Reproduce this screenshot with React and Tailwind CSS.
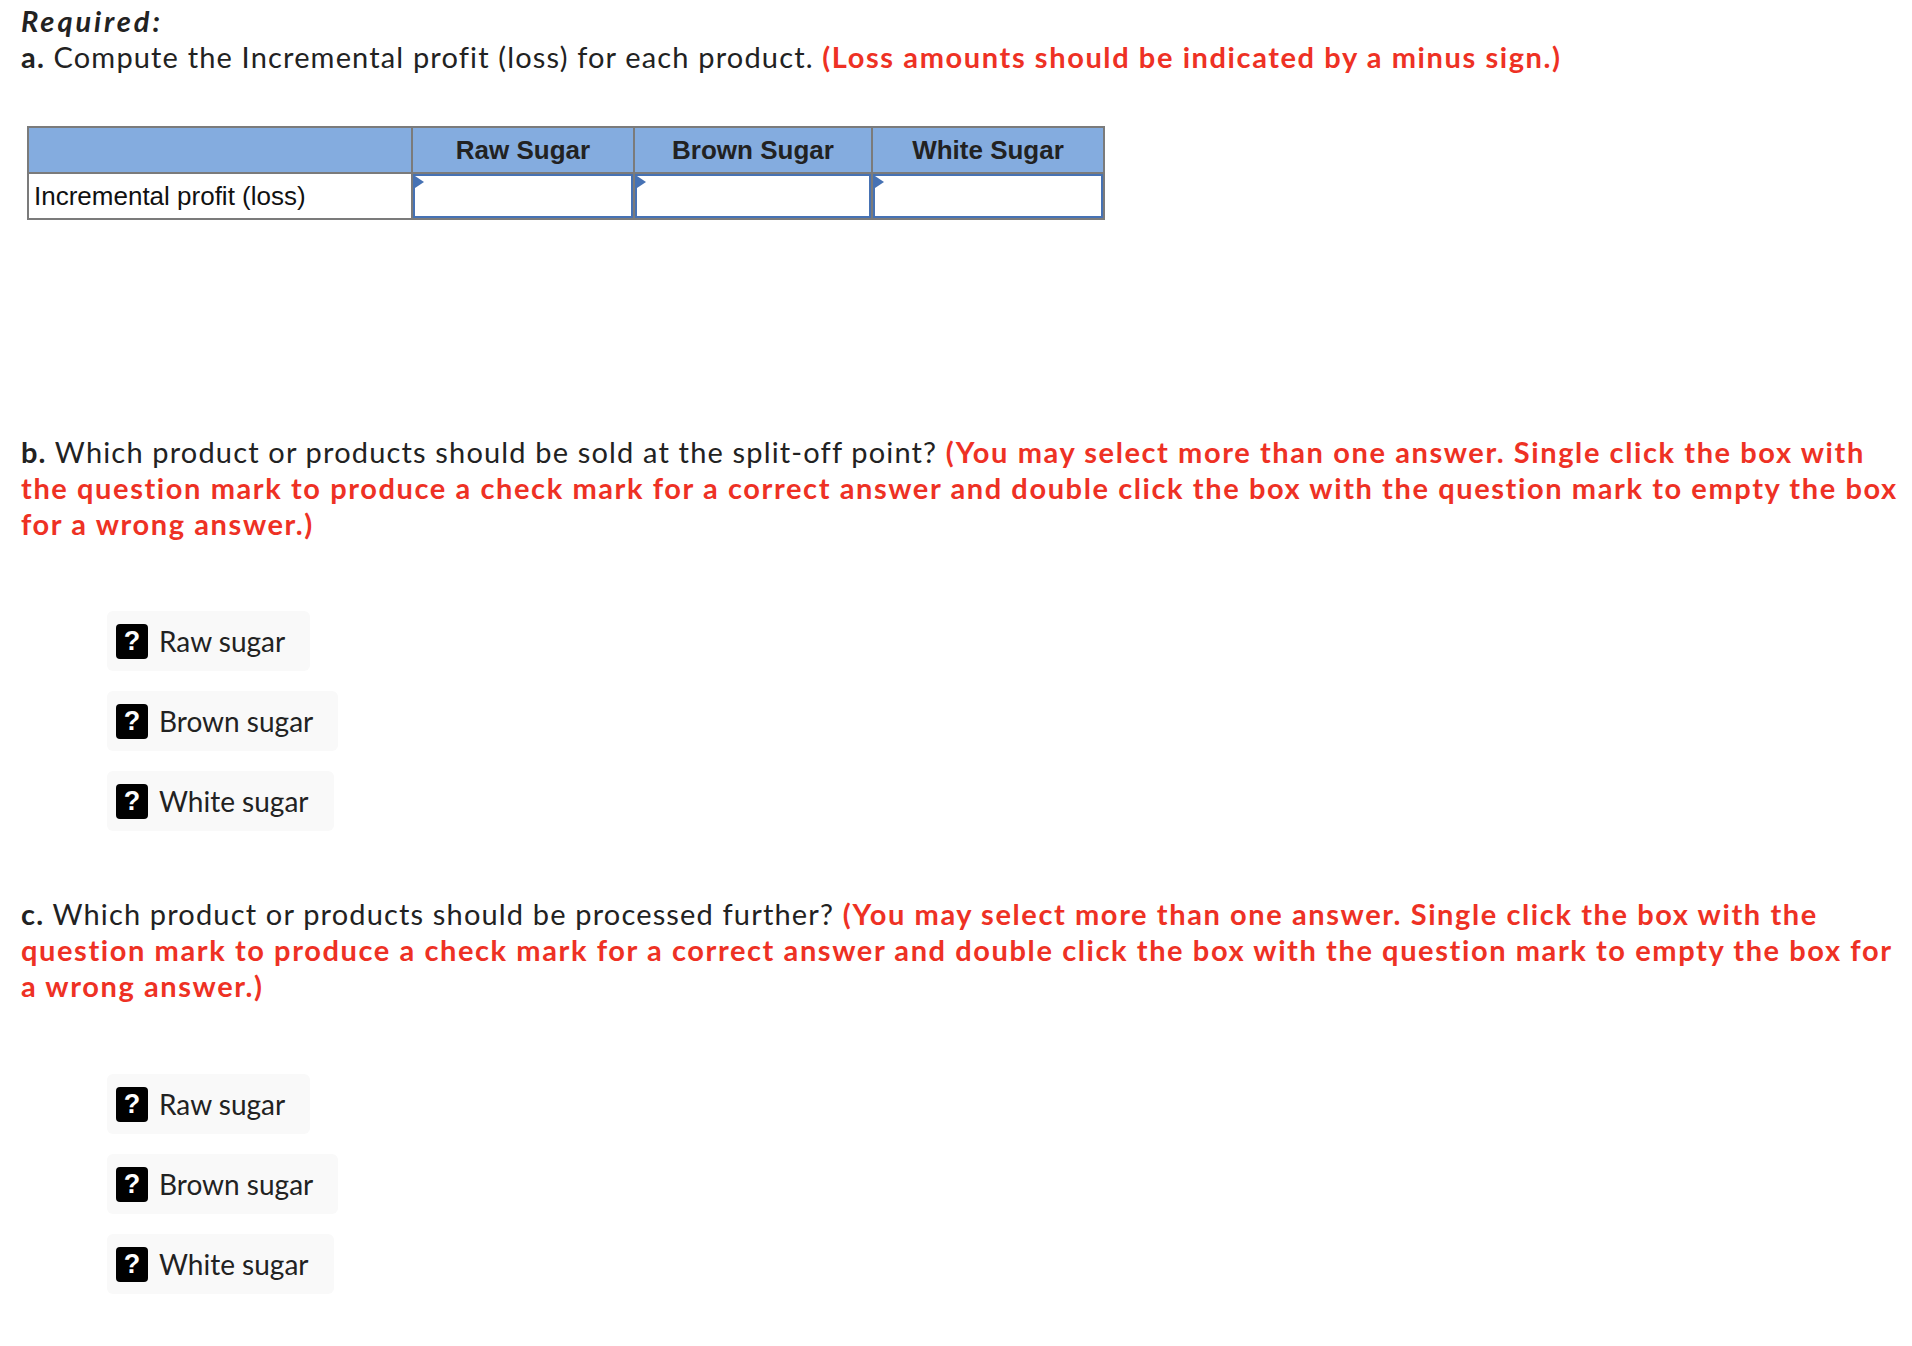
import React from "react"

const products = ["Raw Sugar", "Brown Sugar", "White Sugar"]
const choices = ["Raw sugar", "Brown sugar", "White sugar"]

// line breaks follow the reference exactly
const noteB = [
    "(You may select more than one answer. Single click the box with",
    "the question mark to produce a check mark for a correct answer and double click the box with the question mark to empty the box",
    "for a wrong answer.)",
]
const noteC = [
    "(You may select more than one answer. Single click the box with the",
    "question mark to produce a check mark for a correct answer and double click the box with the question mark to empty the box for",
    "a wrong answer.)",
]

function AnswerCell() {
    return (
        <td className="p-0 border-2 border-[#7b7b7b]">
            <div className="relative h-[44px] border-2 border-[#4672b4] bg-white">
                <span className="absolute left-0 top-0 w-0 h-0 border-y-[6px] border-y-transparent border-l-[9px] border-l-[#4672b4]" />
            </div>
        </td>
    )
}

function CheckChoice({ label }) {
    return (
        <div className="flex items-center gap-[11px] w-fit h-[60px] pl-[9px] pr-[25px] rounded-md bg-[#f9f9f9]">
            <span className="flex items-center justify-center w-[32px] h-[35px] rounded-[4px] bg-black text-white text-[27px] font-bold leading-none font-['Liberation_Sans',Arial,sans-serif]">?</span>
            <span className="text-[28px] text-[#222]">{label}</span>
        </div>
    )
}

function ChoiceList() {
    return (
        <div className="flex flex-col gap-[20px] ml-[86px]">
            {choices.map((c) => (
                <CheckChoice key={c} label={c} />
            ))}
        </div>
    )
}

function Note({ lines }) {
    return (
        <span className="font-bold tracking-[0.055em] text-[#ee3124]">
            {lines[0]}
            <br />
            {lines[1]}
            <br />
            {lines[2]}
        </span>
    )
}

export default function App() {
    return (
        <div className="min-h-screen bg-white pl-[21px] pr-[4px] pt-[3px] pb-10 text-[29px] leading-[36px] tracking-[0.04em] text-[#222] font-['Lato','Noto_Sans',sans-serif]">
            <p className="font-bold italic tracking-[0.1em]">Required:</p>
            <p>
                <b>a.</b> Compute the Incremental profit (loss) for each product.{" "}
                <span className="font-bold tracking-[0.055em] text-[#ee3124]">(Loss amounts should be indicated by a minus sign.)</span>
            </p>

            <table className="mt-[51px] ml-[6px] table-fixed border-collapse w-[1076px] font-['Liberation_Sans',Arial,sans-serif] text-[26px] leading-none tracking-normal">
                <colgroup>
                    <col className="w-[384px]" />
                    <col className="w-[222px]" />
                    <col className="w-[238px]" />
                    <col className="w-[232px]" />
                </colgroup>
                <thead>
                    <tr className="bg-[#84acdf] h-[46px]">
                        <th className="border-2 border-[#7b7b7b]"></th>
                        {products.map((p) => (
                            <th key={p} className="border-2 border-[#7b7b7b] text-center font-bold text-[#222]">{p}</th>
                        ))}
                    </tr>
                </thead>
                <tbody>
                    <tr className="h-[46px]">
                        <td className="border-2 border-[#7b7b7b] pl-[5px] text-left text-[#111]">Incremental profit (loss)</td>
                        <AnswerCell />
                        <AnswerCell />
                        <AnswerCell />
                    </tr>
                </tbody>
            </table>

            <p className="mt-[214px]">
                <b>b.</b> Which product or products should be sold at the split-off point? <Note lines={noteB} />
            </p>
            <div className="mt-[69px] tracking-normal">
                <ChoiceList />
            </div>

            <p className="mt-[65px]">
                <b>c.</b> Which product or products should be processed further? <Note lines={noteC} />
            </p>
            <div className="mt-[70px] tracking-normal">
                <ChoiceList />
            </div>
        </div>
    )
}
